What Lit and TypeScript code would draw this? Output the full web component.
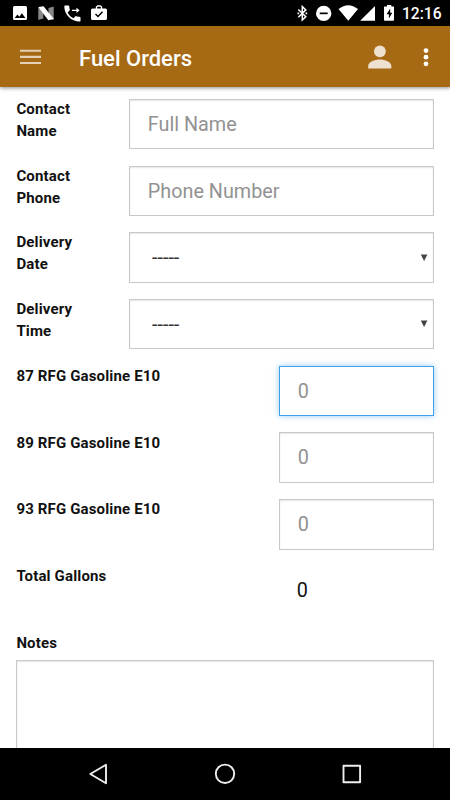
import { LitElement, html, css, svg } from "lit";
import { customElement, property } from "lit/decorators.js";

/** Glyphs of the system bar; each one fills a cell as tall as the bar. */
const glyph = (x: number, width: number, shape: unknown) => html`
  <svg class="glyph" width=${width} height="26" viewBox="${x} 0 ${width} 26">${shape}</svg>
`;

@customElement("status-bar")
class StatusBar extends LitElement {
  static styles = css`
    :host {
      display: flex;
      flex: none;
      height: 26px;
      background: #000;
      color: #fff;
      font-family: Roboto, sans-serif;
    }
    .glyph {
      display: block;
      flex: none;
      fill: #fff;
    }
    .space {
      flex: 1;
    }
    .time {
      width: 48px;
      padding-top: 1px;
      box-sizing: border-box;
      line-height: 26px;
      font-size: 15.6px;
      font-weight: 500;
      white-space: nowrap;
    }
  `;

  render() {
    return html`
      ${glyph(0, 34, svg`<path fill-rule="evenodd" d="M14.500 6h11q1.500 0 1.500 1.500v11q0 1.500-1.500 1.500h-11q-1.500 0-1.500-1.500v-11q0-1.500 1.500-1.500zM14.700 18h10.700l-3.500-4.700-2.600 3.400-1.900-2.300z"/>`)}
      ${glyph(34, 26, svg`<path fill="#888" d="M38.300 7.500l5 0.500v10.500l-5 1.500zM48.500 8l5.200-1.500v13.300l-5.200-1.300z"/><path d="M38.300 7l5.200-0.700 10.300 12.700-5.500 1.200z"/>`)}
      ${glyph(60, 26, svg`<g transform="translate(61.600 2.700) scale(.9)"><path d="M20 15.500c-1.250 0-2.450-.2-3.570-.57-.35-.11-.74-.03-1.020.24l-2.200 2.200c-2.830-1.440-5.150-3.750-6.590-6.580l2.200-2.210c.28-.27.36-.66.25-1.010C8.700 6.450 8.500 5.250 8.500 4c0-.55-.45-1-1-1H4c-.55 0-1 .45-1 1 0 9.390 7.610 17 17 17 .55 0 1-.45 1-1v-3.500c0-.55-.45-1-1-1z"/><path d="M11.500 7.700h5v-2.200l3.500 3-3.500 3v-2.200h-5z"/></g>`)}
      ${glyph(86, 28, svg`<path fill-rule="evenodd" d="M92.500 8.500h3.300v-1.700l1.500-1.500h3.400l1.500 1.500v1.700h3.300q1.500 0 1.500 1.500v8.500q0 1.500-1.500 1.500h-13q-1.500 0-1.500-1.500v-8.500q0-1.500 1.500-1.500zM97.200 8.500h3.600v-1.700h-3.600z"/><path fill="none" stroke="#000" stroke-width="1.500" d="M95.500 14l2.500 2.500 4.500-4.800"/>`)}
      <div class="space"></div>
      ${glyph(294, 18, svg`<path fill="none" stroke="#fff" stroke-width="1.500" d="M298.300 9.500l7.500 7.300-3.500 3.300v-13.500l3.500 3.300-7.500 7.300"/><path d="M297.500 12.500h1.700v1.700h-1.700zM305.500 12.500h1.700v1.700h-1.700z"/>`)}
      ${glyph(312, 23, svg`<circle cx="323.700" cy="13.400" r="7.700"/><path fill="#000" d="M319.700 12.500h8v1.700h-8z"/>`)}
      ${glyph(335, 24, svg`<path d="M338.500 9q9.700-7.600 19.500 0l-9.700 11.700z"/>`)}
      ${glyph(359, 21, svg`<path d="M375 6v14.700h-14.800z"/>`)}
      ${glyph(380, 22, svg`<path d="M384 7q0-.5.500-.5h2.500v-1.500h4.300v1.500h2.200q.5 0 .5.500v13q0 .8-.8.800h-8.400q-.8 0-.8-.8z"/><path fill="#000" d="M390.200 8.500l-3.600 5.700h2.300v4.300l3.400-5.700h-2.100z"/>`)}
      <span class="time">12:16</span>
    `;
  }
}

@customElement("app-header")
class AppHeader extends LitElement {
  static styles = css`
    :host {
      display: flex;
      align-items: center;
      flex: none;
      box-sizing: border-box;
      height: 61px;
      padding: 0 16px 0 20px;
      background: #a66914;
      color: #fff;
      box-shadow: 0 1px 4px rgba(0, 0, 0, 0.45);
      z-index: 1;
    }
    svg {
      display: block;
      flex: none;
    }
    .title {
      flex: 1;
      margin-left: 38px;
      padding-top: 4px;
      font: 500 22px/30px Roboto, sans-serif;
      white-space: nowrap;
    }
    .more {
      margin-left: 26px;
    }
  `;

  render() {
    return html`
      <svg width="21" height="16" viewBox="0 0 21 16" fill="#e4d0b5">
        <path d="M0 .7h21v2.100H0zM0 6.800h21v2.100H0zM0 12.900h21v2.100H0z" />
      </svg>
      <div class="title">Fuel Orders</div>
      <svg width="24" height="24" viewBox="0 0 24 24" fill="#eee1d0">
        <circle cx="11.900" cy="6.300" r="5.900" />
        <path d="M.2 23.500v-2.700c0-4 6.500-6.300 11.600-6.300s11.500 2.300 11.500 6.300v2.700z" />
      </svg>
      <svg class="more" width="16" height="20" viewBox="0 0 16 20" fill="#fff">
        <circle cx="8" cy="3.600" r="2.400" />
        <circle cx="8" cy="10.200" r="2.400" />
        <circle cx="8" cy="16.800" r="2.400" />
      </svg>
    `;
  }
}

@customElement("order-field")
class OrderField extends LitElement {
  @property() label = "";
  @property() kind: "text" | "select" | "amount" | "total" = "text";
  @property() text = "";
  @property({ type: Boolean }) active = false;

  static styles = css`
    :host {
      display: flex;
      justify-content: space-between;
      align-items: flex-start;
      height: 66.7px;
      font-family: Roboto, sans-serif;
    }
    .label {
      width: 80px;
      margin-top: -0.8px;
      color: #111;
      font-size: 15px;
      font-weight: 700;
      letter-spacing: 0.15px;
      line-height: 22px;
    }
    .label.wide {
      width: 200px;
    }
    .box {
      display: flex;
      align-items: center;
      justify-content: space-between;
      box-sizing: border-box;
      width: 305.5px;
      height: 50.5px;
      padding: 0.5px 5px 0 18.3px;
      border: 1px solid #c8c8c8;
      box-shadow: inset 0 1px 2px rgba(0, 0, 0, 0.1);
      color: #929292;
      font-size: 19.8px;
    }
    .select {
      padding-left: 22.5px;
      padding-top: 0;
      color: #333;
    }
    .amount,
    .total {
      width: 155.5px;
    }
    .total {
      padding-left: 17.3px;
      padding-top: 0;
      border-color: transparent;
      box-shadow: none;
      color: #111;
    }
    .active {
      border-color: #3fa2e9;
      box-shadow: 0 0 6px rgba(63, 162, 233, 0.55);
    }
  `;

  render() {
    const wide = this.kind === "amount" || this.kind === "total";
    return html`
      <div class="label ${wide ? "wide" : ""}">${this.label}</div>
      <div class="box ${this.kind} ${this.active ? "active" : ""}">
        <span>${this.text}</span>
        ${this.kind === "select"
          ? html`<svg width="8" height="8" viewBox="0 0 8 8"><path fill="#444" d="M.8 .500h6.600L4.100 7.100z" /></svg>`
          : ""}
      </div>
    `;
  }
}

@customElement("nav-bar")
class NavBar extends LitElement {
  static styles = css`
    :host {
      display: flex;
      flex: none;
      justify-content: space-between;
      box-sizing: border-box;
      height: 52px;
      padding: 0 87px;
      background: #000;
    }
    svg {
      display: block;
      fill: none;
      stroke: #eee;
      stroke-width: 1.9;
      stroke-linejoin: round;
    }
  `;

  render() {
    return html`
      <svg width="22" height="52" viewBox="0 0 22 52"><path d="M3.300 26L19 16.700v18.600z" /></svg>
      <svg width="22" height="52" viewBox="0 0 22 52"><circle cx="11" cy="25.800" r="9.200" /></svg>
      <svg width="22" height="52" viewBox="0 0 22 52"><path d="M2.500 17.700h16.600v16.600H2.500z" /></svg>
    `;
  }
}

@customElement("app-root")
class AppRoot extends LitElement {
  static styles = css`
    :host {
      display: flex;
      flex-direction: column;
      height: 800px;
      overflow: hidden;
      background: #fff;
      font-family: Roboto, sans-serif;
    }
    .form {
      flex: 1;
      min-height: 0;
      overflow: hidden;
      padding: 11.9px 16px 0 16.4px;
    }
    .notes-label {
      height: 28px;
      margin-top: -0.5px;
      color: #111;
      font-size: 15px;
      font-weight: 700;
      letter-spacing: 0.15px;
      line-height: 22.2px;
    }
    .notes {
      box-sizing: border-box;
      height: 140px;
      border: 1px solid #c8c8c8;
      box-shadow: inset 0 1px 2px rgba(0, 0, 0, 0.1);
    }
  `;

  render() {
    return html`
      <status-bar></status-bar>
      <app-header></app-header>
      <div class="form">
        <order-field label="Contact Name" text="Full Name"></order-field>
        <order-field label="Contact Phone" text="Phone Number"></order-field>
        <order-field label="Delivery Date" kind="select" text="-----"></order-field>
        <order-field label="Delivery Time" kind="select" text="-----"></order-field>
        <order-field label="87 RFG Gasoline E10" kind="amount" text="0" active></order-field>
        <order-field label="89 RFG Gasoline E10" kind="amount" text="0"></order-field>
        <order-field label="93 RFG Gasoline E10" kind="amount" text="0"></order-field>
        <order-field label="Total Gallons" kind="total" text="0"></order-field>
        <div class="notes-label">Notes</div>
        <div class="notes"></div>
      </div>
      <nav-bar></nav-bar>
    `;
  }
}
